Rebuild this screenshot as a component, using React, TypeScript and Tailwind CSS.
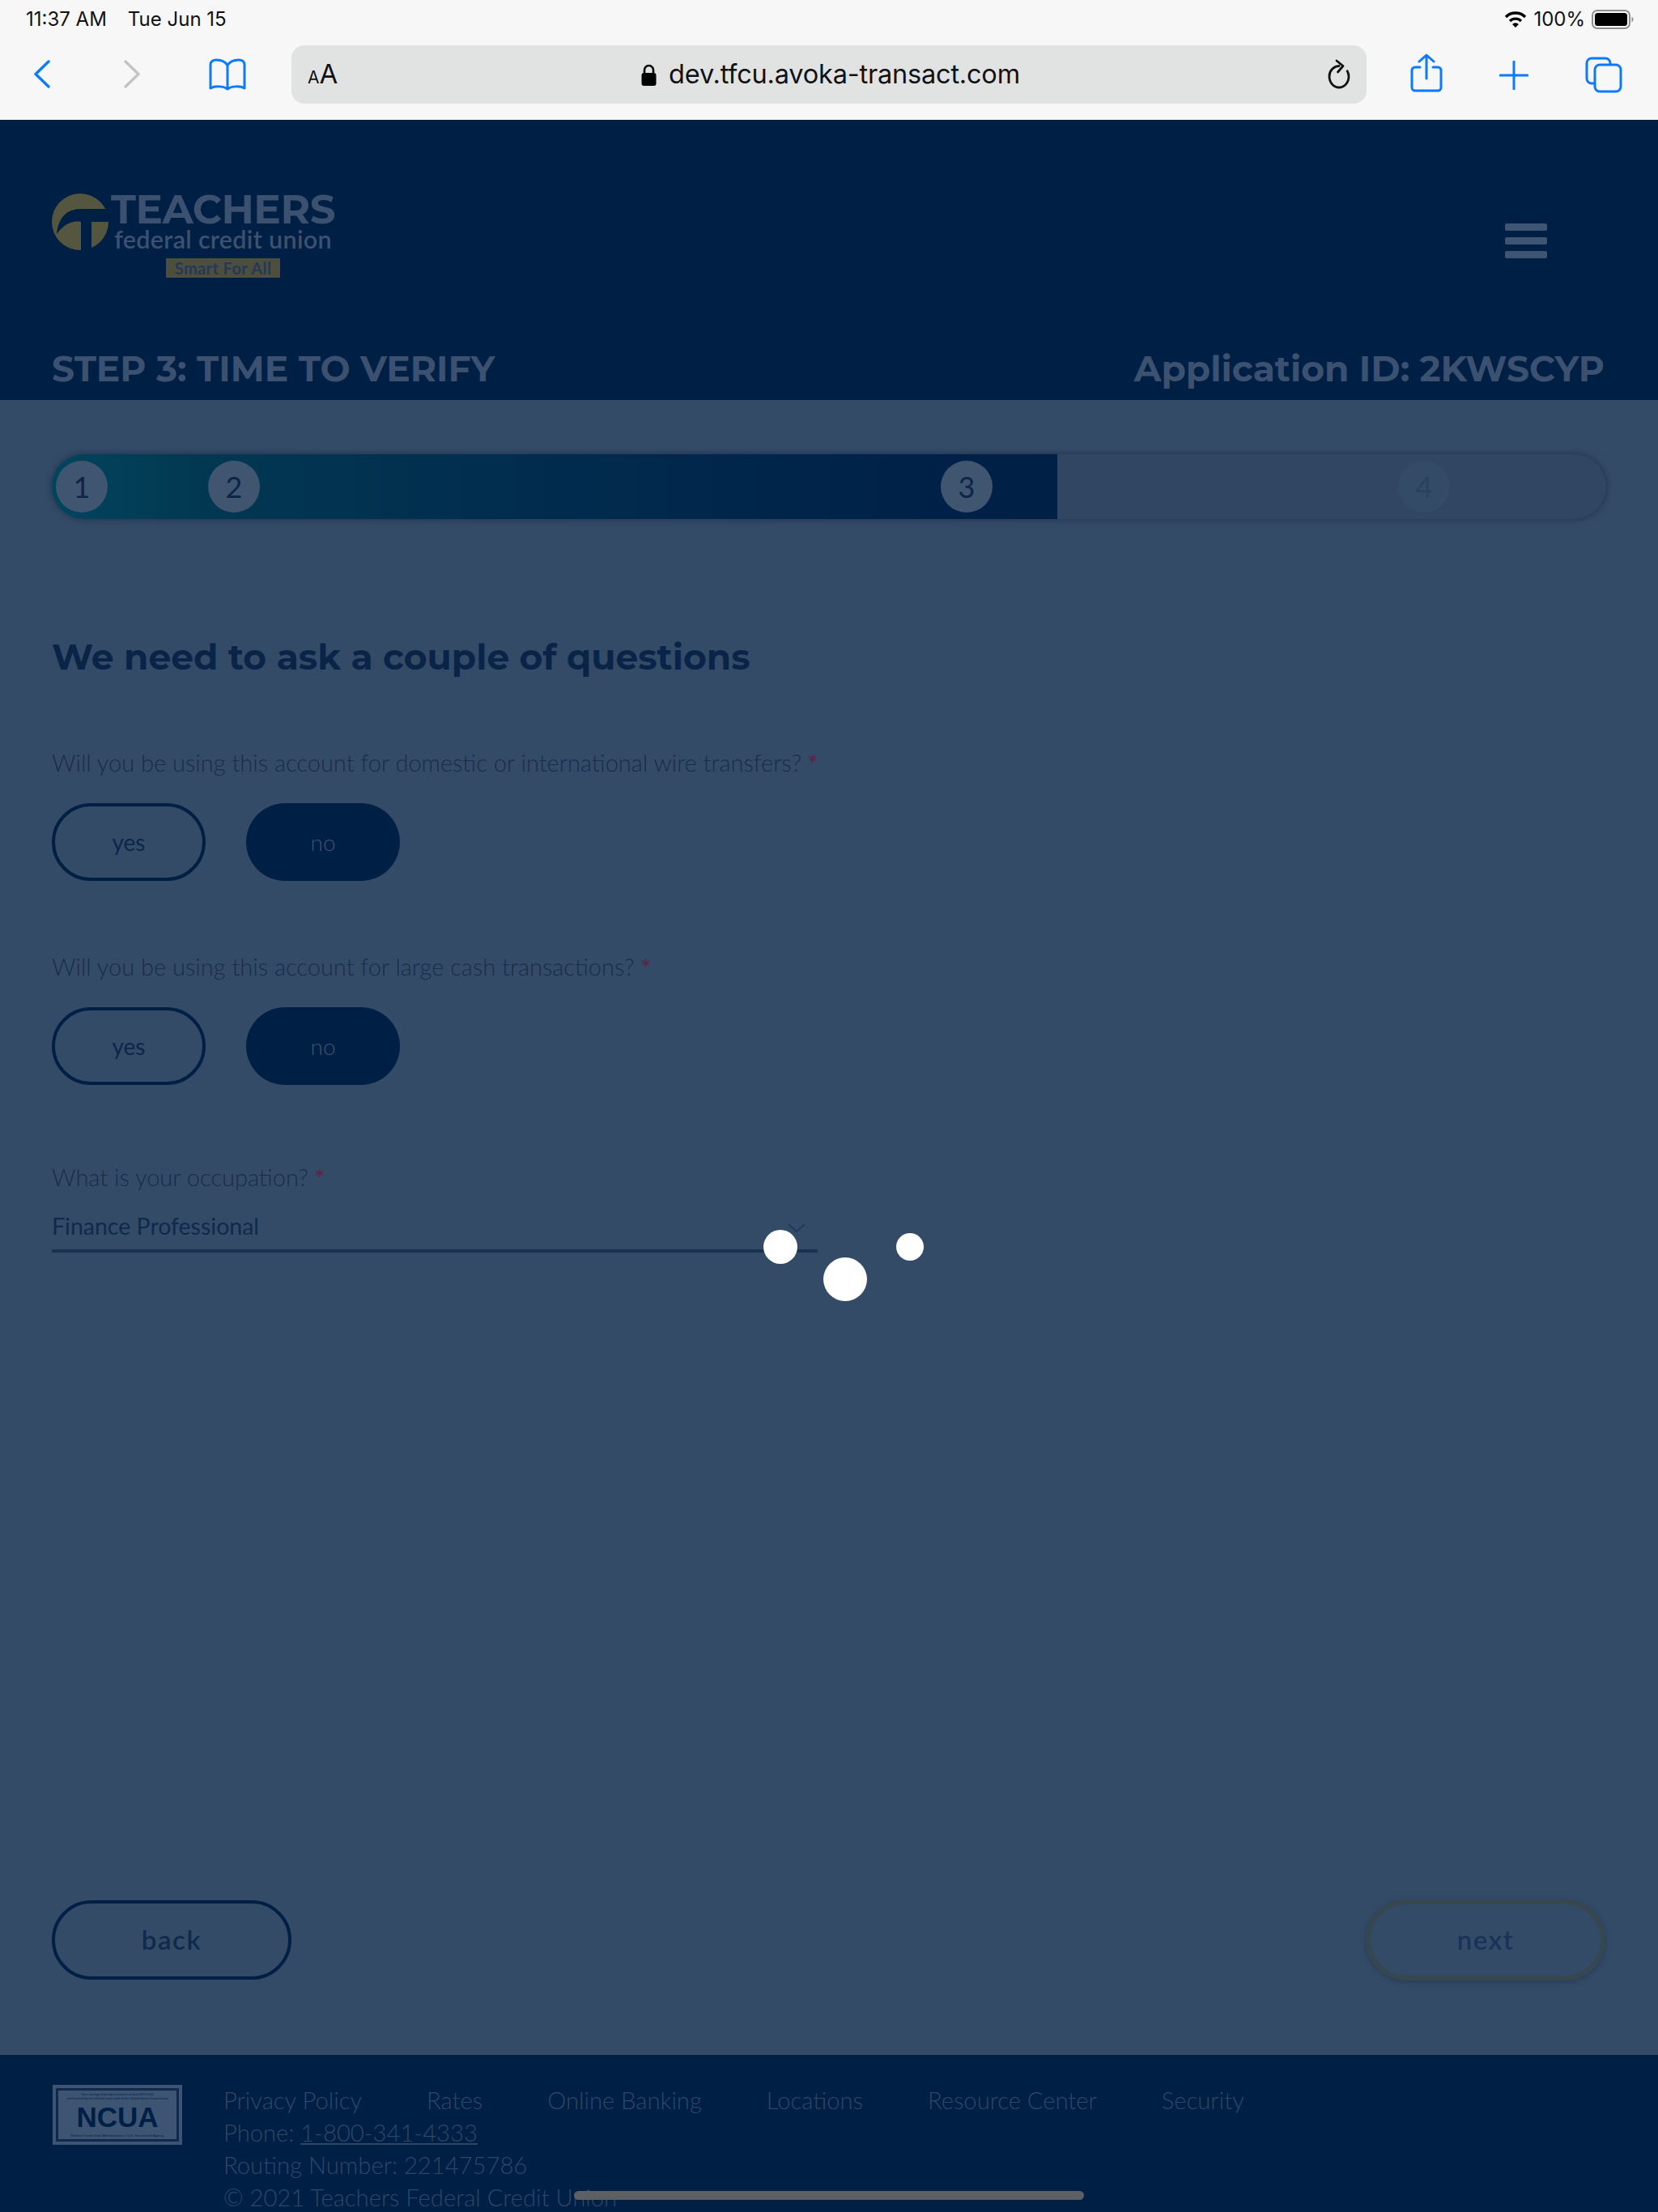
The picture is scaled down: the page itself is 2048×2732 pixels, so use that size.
const HEADING = "font-['Montserrat','Inter',sans-serif]"
const BODY = "font-['Lato','Noto_Sans',sans-serif]"

const FOOTER_LINKS = ['Privacy Policy', 'Rates', 'Online Banking', 'Locations', 'Resource Center', 'Security']

const STEPS = [
  { n: 1, left: 'ml-[5px]' },
  { n: 2, left: 'ml-[124px]' },
  { n: 3, left: 'ml-[841px]' },
]

function StatusBar() {
  return (
    <div className="flex h-[48px] items-center justify-between pl-[32px] pr-[30px] text-[24px] text-[#111] font-['Inter',sans-serif]">
      <div className="flex gap-[26px]">
        <span>11:37 AM</span>
        <span>Tue Jun 15</span>
      </div>
      <div className="flex items-center gap-[8px]">
        <svg width="28" height="22" viewBox="0 0 28 22" fill="none" stroke="#000" strokeWidth="3.4">
          <path d="M2 8a17 17 0 0 1 24 0" />
          <path d="M7 13a10 10 0 0 1 14 0" />
          <path d="M14 21l-4-4a5.6 5.6 0 0 1 8 0z" fill="#000" stroke="none" />
        </svg>
        <span>100%</span>
        <svg width="52" height="24" viewBox="0 0 52 24">
          <rect x="1" y="1" width="46" height="22" rx="6" fill="none" stroke="#8e8e8e" strokeWidth="2" />
          <rect x="4" y="4" width="40" height="16" rx="3.5" fill="#000" />
          <path d="M49.500 8.500a4 4 0 0 1 0 7z" fill="#8e8e8e" />
        </svg>
      </div>
    </div>
  )
}

function Toolbar() {
  return (
    <div className="flex h-[100px] items-start pt-[8px]">
      <div className="flex w-[360px] items-start pl-[41px] pt-[18px]">
        <svg className="mr-[91px]" width="21" height="35" viewBox="0 0 21 35" fill="none" stroke="#0a7aff" strokeWidth="3.400" strokeLinecap="round" strokeLinejoin="round">
          <path d="M19 2 3 17.500 19 33" />
        </svg>
        <svg className="mr-[83px]" width="21" height="35" viewBox="0 0 21 35" fill="none" stroke="#c4c4c6" strokeWidth="3.400" strokeLinecap="round" strokeLinejoin="round">
          <path d="M2 2l16 15.500L2 33" />
        </svg>
        <svg className="-mt-[2px]" width="48" height="40" viewBox="0 0 48 40" fill="none" stroke="#0a7aff" strokeWidth="3" strokeLinejoin="round">
          <path d="M24 9C21 3 15 2 10 2 6 2 3 4 3 8v29c5-3 16-3 21 1 5-4 16-4 21-1V8c0-4-3-6-7-6-5 0-11 1-14 7zM24 9v29" />
        </svg>
      </div>
      <div className="relative flex h-[72px] w-[1328px] items-center justify-center rounded-[16px] bg-[#e1e3e3] pl-[3px]">
        <span className="absolute left-[20px] flex items-baseline font-['Inter',sans-serif] text-[#111]">
          <span className="text-[21px]">A</span>
          <span className="text-[33px]">A</span>
        </span>
        <svg className="mr-[14px]" width="21" height="27" viewBox="0 0 21 27">
          <path d="M5 12V7.500a5.500 5.500 0 0 1 11 0V12" fill="none" stroke="#000" strokeWidth="2.600" />
          <rect x="1.500" y="11" width="18" height="16" rx="3" fill="#000" />
        </svg>
        <span className="font-['Inter',sans-serif] text-[32.500px] leading-none text-[#111] tracking-[-0.2px]">dev.tfcu.avoka-transact.com</span>
        <svg className="absolute right-[19px]" width="30" height="40" viewBox="0 0 30 40" fill="none" stroke="#111" strokeWidth="2.800" strokeLinecap="round" strokeLinejoin="round">
          <path d="M15 9.500C8 10 3 15.500 3 22.500 3 30 8.500 36 15 36s12-6 12-13.500c0-2.500-.6-4.800-1.800-6.800" />
          <path d="M12 3l8 6.500-6.500 7.500" />
        </svg>
      </div>
      <div className="flex flex-1 items-start pl-[54px]">
        <svg className="mr-[70px] mt-[10px]" width="40" height="48" viewBox="0 0 40 48" fill="none" stroke="#0a7aff" strokeWidth="3" strokeLinecap="round" strokeLinejoin="round">
          <path d="M12 17H6a4 4 0 0 0-4 4v21a4 4 0 0 0 4 4h28a4 4 0 0 0 4-4V21a4 4 0 0 0-4-4h-6" />
          <path d="M20 31V2M11 10l9-8 9 8" />
        </svg>
        <svg className="mr-[70px] mt-[19px]" width="36" height="36" viewBox="0 0 36 36" fill="none" stroke="#0a7aff" strokeWidth="3" strokeLinecap="round">
          <path d="M18 1v34M1 18h34" />
        </svg>
        <svg className="mt-[14px]" width="46" height="45" viewBox="0 0 46 45" fill="none" stroke="#0a7aff" strokeWidth="3" strokeLinejoin="round">
          <path d="M11 33H8a6 6 0 0 1-6-6V8a6 6 0 0 1 6-6h17a6 6 0 0 1 6 6v2" />
          <rect x="12" y="10" width="32" height="33" rx="6" />
        </svg>
      </div>
    </div>
  )
}

function Logo() {
  return (
    <div className="flex items-start">
      <svg className="mt-[1px]" width="70" height="70" viewBox="0 0 70 70">
        <circle cx="35" cy="35" r="35" fill="#55563f" />
        <path d="M6 50C8 30 18 19 36 19h34v16H49v35H36V35C25 33 15 38 6 50z" fill="#001f45" />
      </svg>
      <div className="ml-[3px] mt-[3px] flex flex-col items-center">
        <span className="text-[50px] leading-[36px] font-bold tracking-[-0.5px] text-[#3c5170] font-['Montserrat','Inter',sans-serif]">TEACHERS</span>
        <span className="mt-[2px] text-[30.500px] leading-[32px] font-semibold tracking-[0.3px] text-[#3c5170] font-['Lato',sans-serif]">federal credit union</span>
        <span className="mt-[8px] flex h-[24px] w-[141px] items-center justify-center bg-[#4d4e3e] text-[20px] font-bold tracking-[0.4px] text-[#243958] font-['Lato',sans-serif]">Smart For All</span>
      </div>
    </div>
  )
}

function Header() {
  return (
    <header className="flex h-[346px] flex-col bg-[#001f45] pl-[64px] pr-[66px]">
      <div className="flex items-start justify-between pt-[90px]">
        <Logo />
        <div className="mr-[71px] mt-[38px] flex w-[52px] flex-col gap-[8px]">
          <div className="h-[9px] rounded-[2px] bg-[#3e5573]" />
          <div className="h-[9px] rounded-[2px] bg-[#3e5573]" />
          <div className="h-[9px] rounded-[2px] bg-[#3e5573]" />
        </div>
      </div>
      <div className={`mt-[85px] flex items-center justify-between text-[44px] leading-[54px] font-bold text-[#3c5170] ${HEADING}`}>
        <span>STEP 3: TIME TO VERIFY</span>
        <span>Application ID: 2KWSCYP</span>
      </div>
    </header>
  )
}

function Progress() {
  return (
    <div className="relative mx-[64px] mt-[67px] flex h-[80px] w-[1920px] rounded-[40px] bg-[#304663] shadow-[0_0_6px_2px_rgba(30,50,75,0.7)]">
      <div className="flex h-full w-[1242px] items-center rounded-l-[40px] bg-[linear-gradient(90deg,#01455c_0%,#023852_14%,#012d4e_45%,#00244a_75%,#001f45_100%)]">
        {STEPS.map((s) => (
          <div key={s.n} className={`flex h-[64px] w-[64px] shrink-0 items-center justify-center rounded-full bg-[#3f5570] text-[36px] text-[#0d2548] ${BODY} ${s.left}`}>
            {s.n}
          </div>
        ))}
      </div>
      <div className={`ml-[421px] mt-[8px] flex h-[64px] w-[64px] items-center justify-center rounded-full bg-[#344b68] text-[36px] text-[#2b405c] ${BODY}`}>
        4
      </div>
    </div>
  )
}

function Question({ label }: { label: string }) {
  return (
    <div>
      <p className={`text-[29px] leading-[36px] font-light text-[#182c4c] ${BODY}`}>
        {label} <span className="font-bold text-[#5c2647]">*</span>
      </p>
      <div className="mt-[32px] flex gap-[50px]">
        <div className={`flex h-[96px] w-[190px] items-center justify-center rounded-full border-[4px] border-[#001f45] text-[28px] text-[#0c2649] ${BODY}`}>yes</div>
        <div className={`flex h-[96px] w-[190px] items-center justify-center rounded-full bg-[#001f45] text-[28px] font-light text-[#3c5170] ${BODY}`}>no</div>
      </div>
    </div>
  )
}

function Footer() {
  return (
    <footer className={`flex h-[194px] gap-[51px] overflow-hidden bg-[#001f45] pl-[65px] pt-[36px] text-[29.200px] leading-[40px] font-light text-[#2f4767] ${BODY}`}>
      <div className="mt-[1px] flex h-[74px] w-[160px] shrink-0 flex-col items-center justify-center bg-[#3d5473] p-[4px]">
        <div className="flex h-full w-full flex-col items-center justify-between border-[3px] border-[#10294c] py-[2px] font-['Liberation_Sans',sans-serif] font-normal text-[#001f45]">
          <div className="flex flex-col items-center text-[4px] leading-[5px]">
            <span>Your savings federally insured to at least $250,000</span>
            <span>and backed by the full faith and credit of the United States Government</span>
          </div>
          <span className="text-[35px] leading-[30px] font-bold">NCUA</span>
          <span className="text-[4px] leading-[5px]">National Credit Union Administration, a U.S. Government Agency</span>
        </div>
      </div>
      <div>
        <div className="flex gap-[80px]">
          {FOOTER_LINKS.map((l) => (
            <span key={l}>{l}</span>
          ))}
        </div>
        <div>
          Phone: <span className="underline">1-800-341-4333</span>
        </div>
        <div>Routing Number: 221475786</div>
        <div>© 2021 Teachers Federal Credit Union</div>
      </div>
    </footer>
  )
}

export default function App() {
  return (
    <div className="relative flex h-[2732px] w-[2048px] flex-col overflow-hidden bg-[#344b68]">
      <div className="h-[148px] bg-[#f7f7f7]">
        <StatusBar />
        <Toolbar />
      </div>

      <Header />

      <main className="flex flex-1 flex-col">
        <Progress />

        <div className="flex flex-1 flex-col px-[64px] pt-[143px]">
          <h1 className={`text-[44px] leading-[54px] font-bold text-[#0a2448] ${HEADING}`}>We need to ask a couple of questions</h1>

          <div className="mt-[86px] flex flex-col gap-[88px]">
            <Question label="Will you be using this account for domestic or international wire transfers?" />
            <Question label="Will you be using this account for large cash transactions?" />
          </div>

          {/* occupation select */}
          <div className="mt-[96px] w-[946px]">
            <p className={`text-[29px] leading-[36px] font-light text-[#182c4c] ${BODY}`}>
              What is your occupation? <span className="font-bold text-[#5c2647]">*</span>
            </p>
            <div className={`mt-[17px] flex h-[58px] items-start justify-between border-b-[4px] border-[#1a3252] text-[28.500px] leading-[36px] text-[#0f2a4c] ${BODY}`}>
              <span className="mt-[7px]">Finance Professional</span>
              <svg className="mr-[15px] mt-[22px]" width="22" height="11" viewBox="0 0 22 11" fill="none" stroke="#1f3a5c" strokeWidth="2">
                <path d="M1 1l10 9 10-9" />
              </svg>
            </div>
          </div>

          <div className={`mb-[92px] mt-auto flex items-center justify-between pr-[1px] text-[33px] font-semibold tracking-[1.500px] text-[#0f2a4c] ${BODY}`}>
            <div className="flex h-[98px] w-[296px] items-center justify-center rounded-full border-[4px] border-[#001f45]">back</div>
            <div className="flex h-[100px] w-[296px] items-center justify-center rounded-full border-[6px] border-[#36474f] shadow-[0_2px_6px_rgba(30,50,75,0.6)] text-[#17335a]">next</div>
          </div>
        </div>
      </main>

      <Footer />

      {/* loading spinner sits over the page */}
      <div className="absolute left-[943px] top-[1519px] h-[42px] w-[42px] rounded-full bg-white" />
      <div className="absolute left-[1017px] top-[1553px] h-[54px] w-[54px] rounded-full bg-white" />
      <div className="absolute left-[1107px] top-[1523px] h-[34px] w-[34px] rounded-full bg-white" />

      {/* home indicator */}
      <div className="absolute left-[709px] top-[2706px] h-[11px] w-[630px] rounded-full bg-[#5c5f63]" />
    </div>
  )
}
